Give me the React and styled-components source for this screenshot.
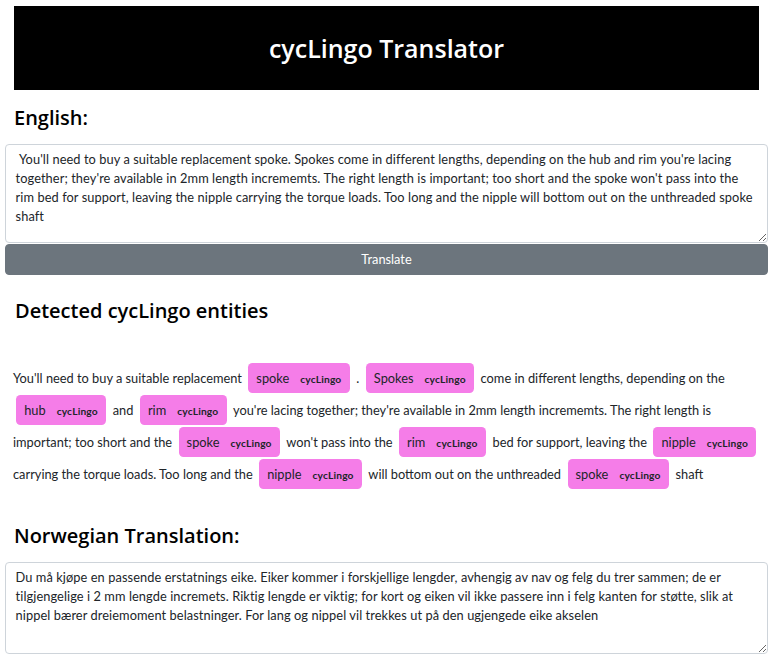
import React from "react";
import styled, { createGlobalStyle } from "styled-components";

const Global = createGlobalStyle`
  html, body { margin: 0; padding: 0; background: #fff; }
  body {
    font-family: Lato, "Noto Sans", "Liberation Sans", sans-serif;
    font-size: 12.8px;
    line-height: 1.5;
    color: #212529;
  }
  * { box-sizing: border-box; }
`;

const Page = styled.div`
  width: 772px;
  padding: 6px 4px 0 5px;
  display: flex;
  flex-direction: column;
`;

const Banner = styled.header`
  margin: 0 9px 0 9px;
  height: 84px;
  background: #000;
  display: flex;
  align-items: center;
  justify-content: center;
`;

const Title = styled.h2`
  margin: 0;
  color: #fff;
  font-family: "Open Sans", "Noto Sans", sans-serif;
  font-weight: 600;
  font-size: 25px;
  line-height: 1.2;
`;

const Heading = styled.h4`
  margin: ${(p) => p.$mt}px 0 ${(p) => p.$mb}px ${(p) => p.$ml}px;
  font-family: "Open Sans", "Noto Sans", sans-serif;
  font-weight: 600;
  font-size: 20px;
  line-height: 24px;
  color: #000;
`;

const TextBox = styled.textarea`
  display: block;
  width: 100%;
  height: ${(p) => p.$h}px;
  margin: 0;
  padding: 4.8px 9.6px;
  font-family: Lato, "Noto Sans", sans-serif;
  font-size: 12.8px;
  line-height: 1.5;
  letter-spacing: 0.08px;
  color: #212529;
  background: #fff;
  border: 1px solid #ced4da;
  border-radius: 4px;
  resize: vertical;
  outline: none;
`;

const Button = styled.button`
  display: block;
  width: 100%;
  margin: 1px 0 0;
  padding: 4.8px 9.6px;
  font-family: Lato, "Noto Sans", sans-serif;
  font-size: 12.8px;
  line-height: 19.2px;
  color: #fff;
  background: #6c757d;
  border: 1px solid #6c757d;
  border-radius: 4px;
  cursor: pointer;
`;

const Entities = styled.div`
  margin: 40px 0 0 8px;
  padding-right: 2px;
  line-height: 2.5;
  direction: ltr;
`;

const Mark = styled.mark`
  background: #f57de8;
  color: #212529;
  padding: 7px 8.5px 7px 8px;
  margin: 0 0.25em;
  line-height: 1;
  border-radius: 0.35em;
`;

const Label = styled.span`
  font-size: 0.8em;
  font-weight: 700;
  line-height: 1;
  letter-spacing: 0.15px;
  vertical-align: middle;
  margin-left: 11px;
`;

const Ent = ({ children }) => (
  <Mark>
    {children}
    <Label>cycLingo</Label>
  </Mark>
);

const english =
  " You'll need to buy a suitable replacement spoke. Spokes come in different lengths, depending on the hub and rim you're lacing together; they're available in 2mm length incrememts. The right length is important; too short and the spoke won't pass into the rim bed for support, leaving the nipple carrying the torque loads. Too long and the nipple will bottom out on the unthreaded spoke shaft";

const norwegian =
  "Du må kjøpe en passende erstatnings eike. Eiker kommer i forskjellige lengder, avhengig av nav og felg du trer sammen; de er tilgjengelige i 2 mm lengde incremets. Riktig lengde er viktig; for kort og eiken vil ikke passere inn i felg kanten for støtte, slik at nippel bærer dreiemoment belastninger. For lang og nippel vil trekkes ut på den ugjengede eike akselen";

export default function App() {
  return (
    <>
      <Global />
      <Page>
        <Banner>
          <Title>cycLingo Translator</Title>
        </Banner>
        <Heading $mt={16} $mb={14} $ml={9}>English:</Heading>
        <TextBox $h={99} defaultValue={english} />
        <Button>Translate</Button>
        <Heading $mt={24} $mb={0} $ml={10}>Detected cycLingo entities</Heading>
        <Entities>
          You'll need to buy a suitable replacement <Ent>spoke</Ent> . <Ent>Spokes</Ent> come in
          different lengths, depending on the <Ent>hub</Ent> and <Ent>rim</Ent> you're lacing
          together; they're available in 2mm length incrememts. The right length is important; too
          short and the <Ent>spoke</Ent> won't pass into the <Ent>rim</Ent> bed for support,
          leaving the <Ent>nipple</Ent> carrying the torque loads. Too long and the{" "}
          <Ent>nipple</Ent> will bottom out on the unthreaded <Ent>spoke</Ent> shaft
        </Entities>
        <Heading $mt={33} $mb={14} $ml={9}>Norwegian Translation:</Heading>
        <TextBox $h={92} defaultValue={norwegian} />
      </Page>
    </>
  );
}
